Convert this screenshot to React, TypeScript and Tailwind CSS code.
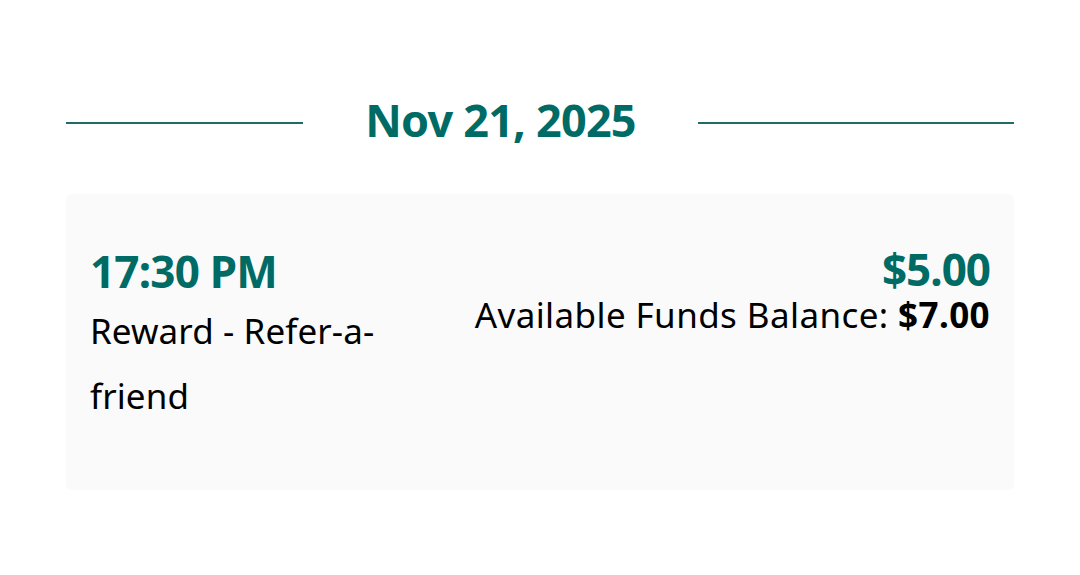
export default function App() {
  return (
    <div className="min-h-screen w-full bg-white font-['Noto_Sans',sans-serif] text-black">
      <div className="px-[66px] pt-[94px]">
        <div className="flex items-center">
          <div className="h-[2px] w-[237px] bg-[#1f6b68]" />
          <div className="flex flex-1 justify-center">
            <h2 className="-translate-y-[3px] text-[45px] leading-[58px] font-bold tracking-[-0.8px] text-[#006b64]">
              Nov 21, 2025
            </h2>
          </div>
          <div className="h-[2px] w-[316px] bg-[#1f6b68]" />
        </div>

        <div className="mt-[42px] flex h-[296px] justify-between rounded-md bg-[#fafafa] px-6 pt-[50px]">
          <div className="w-[310px]">
            <div className="text-[44px] leading-[54px] font-bold tracking-[-0.8px] text-[#006b64]">
              17:30 PM
            </div>
            <div className="text-[35px] leading-[65px] tracking-[0.1px]">Reward - Refer-a-friend</div>
          </div>
          <div className="text-right">
            <div className="text-[44px] leading-[50px] font-bold tracking-[-1px] text-[#006b64]">
              $5.00
            </div>
            <div className="text-[35px] leading-[42px] tracking-[0.4px]">
              Available Funds Balance: <span className="font-bold">$7.00</span>
            </div>
          </div>
        </div>
      </div>
    </div>
  );
}
